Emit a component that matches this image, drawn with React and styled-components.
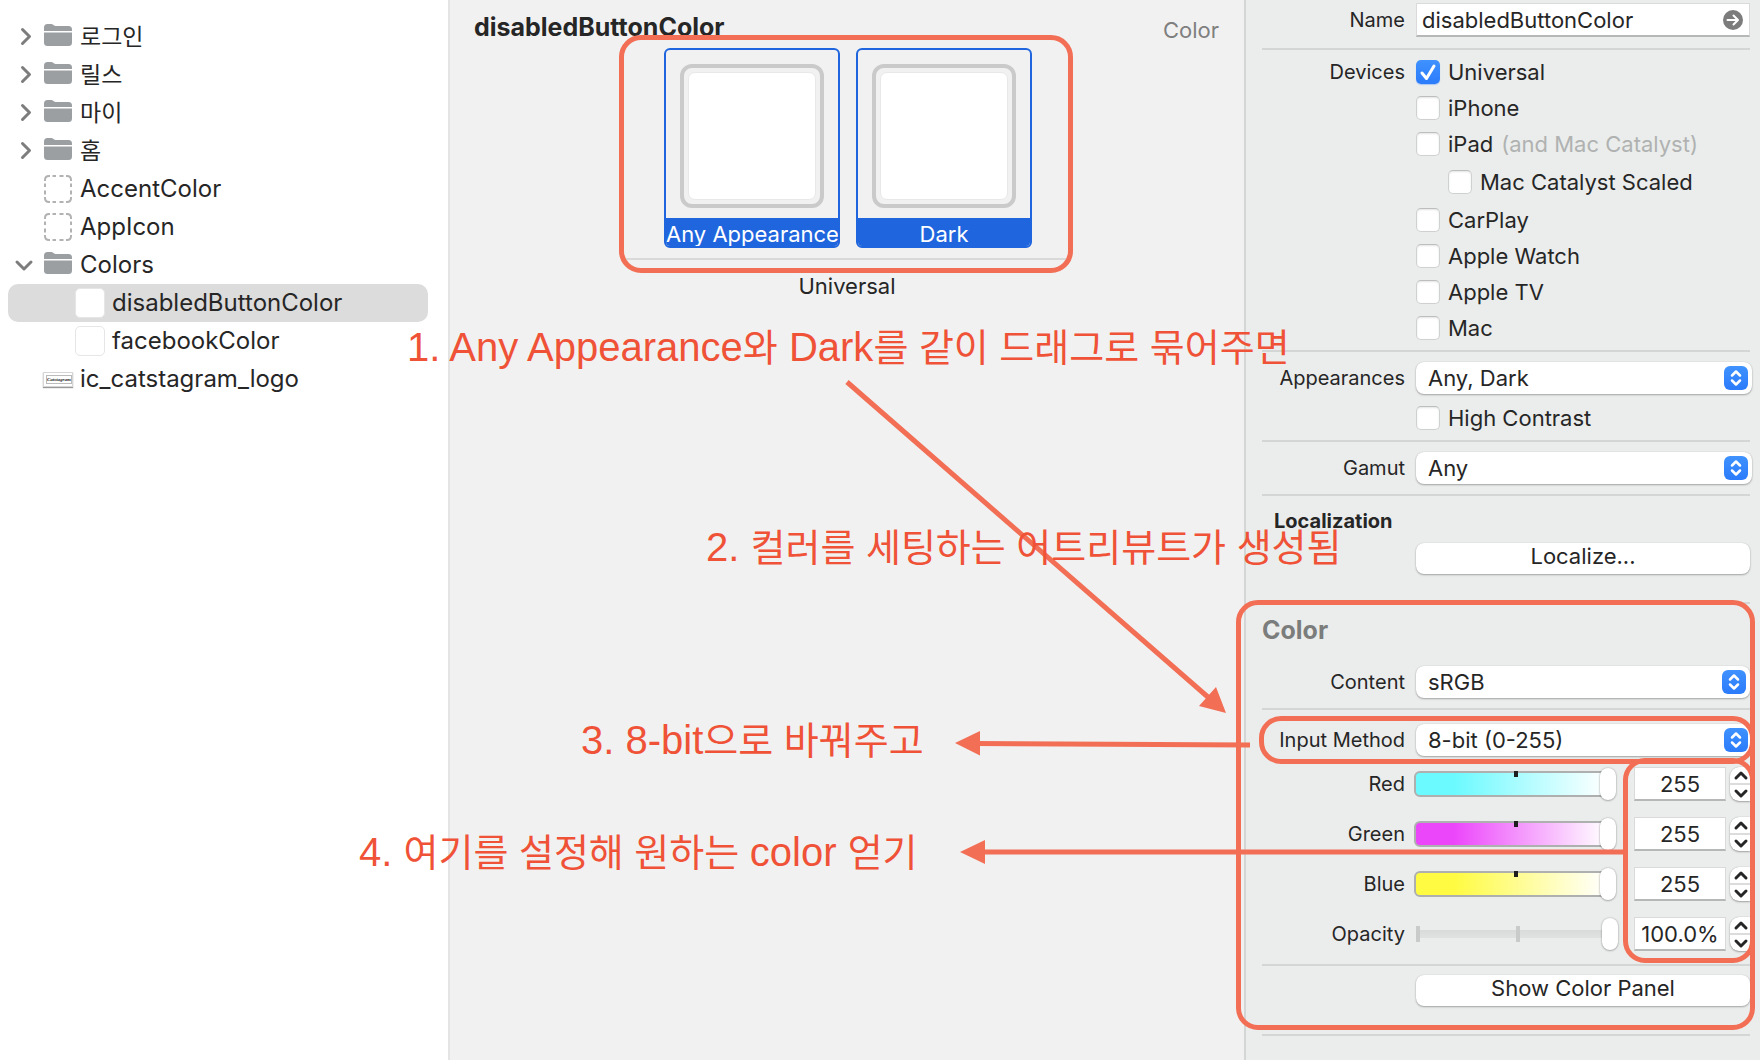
import React from "react";
import styled, { createGlobalStyle, css } from "styled-components";

const sans = `Inter, "Noto Sans CJK KR", sans-serif`;
const ink = "#262626";
const coral = "#f26f56";

const Global = createGlobalStyle`
  * { box-sizing: border-box; }
  html, body { margin: 0; }
  body { background: #fff; color: ${ink}; font: 22px/28px ${sans}; }
  button, input, select { font: inherit; color: inherit; margin: 0; }
`;

const Page = styled.div`
  position: relative;
  display: grid;
  grid-template-columns: 450px minmax(0, 1fr) 516px;
  min-height: 100vh;
  overflow: hidden;
`;

/* ---------- asset list ---------- */
const Sidebar = styled.nav`
  background: #fff;
  border-right: 2px solid #e4e4e4;
  padding: 18px 20px 0 8px;
`;
const Tree = styled.ul`
  list-style: none;
  margin: 0;
  padding: 0;
`;
const Row = styled.li`
  display: flex;
  align-items: center;
  height: 38px;
  padding-left: ${(p) => (p.$nested ? 67 : 8)}px;
  border-radius: 10px;
  background: ${(p) => (p.$selected ? "#dcdcdc" : "transparent")};
`;
const Disclosure = styled.span`
  display: flex;
  justify-content: center;
  width: 16px;
  margin-right: 12px;
`;
const RowIcon = styled.span`
  display: flex;
  align-items: center;
  justify-content: center;
  width: 28px;
  margin-right: 8px;
`;
const Swatch = styled.span`
  width: 30px;
  height: 30px;
  margin-right: 7px;
  background: #fff;
  border: 1px solid #e6e6e6;
  border-radius: 5px;
`;
const Thumb = styled.span`
  flex: none;
  display: flex;
  width: 30px;
  height: 15px;
  padding: 2px;
  background: #fff;
  border: 1px solid #d6d6d6;
  box-shadow: 0 1px 1px #999;
`;
const ThumbText = styled.span`
  flex: 1;
  border: 1px solid #bbb;
  font: italic bold 5px/7px "Liberation Serif", serif;
  text-align: center;
`;
const RowName = styled.span`
  font-size: 24px;
`;
const KoreanName = styled.span`
  font-size: 23px;
  line-height: 26px;
`;

const Chevron = ({ open }) => (
  <svg width="18" height="18" viewBox="0 0 18 18" fill="none" stroke="#7d7d7d" strokeWidth="3" strokeLinecap="round" strokeLinejoin="round" overflow="visible">
    <path d={open ? "M2 6l7 7 7-7" : "M7.500 1.500l7 7-7 7"} />
  </svg>
);
const Folder = () => (
  <svg width="28" height="24" viewBox="0 2 28 24" fill="#9b9fa2" overflow="visible">
    <path d="M0 8V4.500Q0 1 3.500 1H7Q8.500 1 9.500 2T12 3H24.500Q28 3 28 6.500V8Z" />
    <path d="M0 9.500H28V19.500Q28 23 24.500 23H3.500Q0 23 0 19.500Z" />
  </svg>
);
const Dashed = () => (
  <svg width="28" height="28" viewBox="0 0 28 28" fill="none" stroke="#b2b2b2" strokeWidth="2">
    <path d="M1 6V5Q1 1 5 1H6M22 1H23Q27 1 27 5V6M27 22V23Q27 27 23 27H22M6 27H5Q1 27 1 23V22" />
    <path d="M8.500 1H12M15.500 1H19.500M8.500 27H12M15.500 27H19.500M1 8.500V12M1 15.500V19.500M27 8.500V12M27 15.500V19.500" />
  </svg>
);

/* ---------- canvas ---------- */
const Canvas = styled.main`
  background: #f1f1f1;
  padding-top: 12px;
`;
const CanvasHead = styled.header`
  display: flex;
  align-items: flex-start;
  justify-content: space-between;
  height: 24px;
  padding: 0 25px 0 24px;
`;
const AssetTitle = styled.h1`
  margin: 0;
  font-size: 25px;
  line-height: 30px;
  font-weight: 700;
`;
const AssetKind = styled.span`
  padding-top: 4px;
  color: #7f7f7f;
`;
const AssetSet = styled.section`
  position: relative;
  width: 446px;
  margin: 0 auto;
  padding-top: 12px;
`;
const Wells = styled.div`
  display: flex;
  justify-content: center;
  gap: 16px;
  padding: 0 0 10px 2px;
  border-bottom: 2px solid #d9d9d9;
`;
const Well = styled.figure`
  display: flex;
  flex-direction: column;
  align-items: center;
  width: 176px;
  height: 200px;
  margin: 0;
  padding-top: 14px;
  border: 2px solid #1f66de;
  border-radius: 6px;
  overflow: hidden;
`;
const WellFrame = styled.div`
  width: 144px;
  height: 144px;
  padding: 4px;
  border: 4px solid #cacaca;
  border-radius: 12px;
`;
const WellColor = styled.div`
  height: 128px;
  background: #fff;
  border: 1px solid #e8e8e8;
  border-radius: 7px;
`;
const WellName = styled.figcaption`
  align-self: stretch;
  margin-top: 10px;
  padding: 2px 0;
  background: #1f66de;
  color: #fff;
  line-height: 28px;
  text-align: center;
  white-space: nowrap;
`;
const Idiom = styled.p`
  margin: 12px 0 0;
  text-align: center;
`;

/* ---------- inspector ---------- */
const Inspector = styled.aside`
  background: #ebedec;
  border-left: 2px solid #d4d6d5;
  padding: 3px 10px 0 16px;
`;
const Group = styled.section`
  position: relative;
  display: flex;
  flex-direction: column;
  gap: ${(p) => p.$gap ?? 12}px;
  padding: ${(p) => p.$pad || "10px 0"};
  border-bottom: 2px solid #d4d6d5;
`;
const ColorSection = styled.div`
  position: relative;
`;
const Field = styled.div`
  display: grid;
  grid-template-columns: 143px minmax(0, 1fr);
  column-gap: 11px;
  align-items: center;
  min-height: ${(p) => p.$height || 32}px;
`;
const labelText = css`
  font-size: 20px;
  line-height: 24px;
  text-align: right;
  white-space: nowrap;
`;
const FieldLabel = styled.label`
  ${labelText}
  width: 143px;
`;
const NameBox = styled.div`
  display: flex;
  align-items: center;
  height: 34px;
  padding-right: 6px;
  background: #fff;
  border: 1px solid #d9dad9;
  border-bottom: 2px solid #b6b7b7;
`;
const NameInput = styled.input`
  flex: 1;
  min-width: 0;
  padding: 0 5px;
  border: 0;
  outline: 0;
  background: transparent;
`;
const GoButton = styled.button`
  display: flex;
  padding: 0;
  border: 0;
  background: none;
`;
const Devices = styled.fieldset`
  display: grid;
  grid-template-columns: 143px minmax(0, 1fr);
  column-gap: 11px;
  margin: 0;
  padding: 0;
  border: 0;
`;
const DevicesLabel = styled.span`
  ${labelText}
`;
const CheckList = styled.div`
  display: flex;
  flex-direction: column;
  gap: 12px;
`;
const CheckRow = styled.label`
  display: flex;
  align-items: center;
  height: 24px;
  gap: 8px;
  margin: ${(p) => (p.$nested ? "2px 0 2px 32px" : "0")};
  white-space: nowrap;
`;
const CheckBox = styled.input.attrs({ type: "checkbox" })`
  appearance: none;
  flex: none;
  width: 24px;
  height: 24px;
  border: 1px solid #cfd0d0;
  border-top-color: #bcbdbd;
  border-radius: 5px;
  background: #fff;
  box-shadow: inset 0 1px 2px #e4e4e4;
  &:checked {
    border: 0;
    box-shadow: 0 1px 1px #a9c6f5;
    background: url("data:image/svg+xml,%3Csvg xmlns='http://www.w3.org/2000/svg' viewBox='0 0 24 24' fill='none' stroke='white' stroke-width='3' stroke-linecap='round' stroke-linejoin='round'%3E%3Cpath d='M6 13l4.500 5.500L18 6'/%3E%3C/svg%3E"),
      linear-gradient(#3f92ff, #2b7bfb);
  }
`;
const Muted = styled.span`
  color: #b0b2b1;
`;
const SelectWrap = styled.div`
  position: relative;
  display: flex;
  align-items: center;
  margin-right: ${(p) => (p.$flush ? 0 : -2)}px;
  height: 32px;
  border-radius: 8px;
  background: #fff;
  box-shadow: 0 0 1px rgba(0, 0, 0, 0.2), 0 1px 2px rgba(0, 0, 0, 0.3);
`;
const Select = styled.select`
  appearance: none;
  width: 100%;
  height: 32px;
  padding: 0 40px 0 12px;
  border: 0;
  background: transparent;
`;
const SelectCap = styled.span`
  position: absolute;
  right: 4px;
  top: 4px;
  display: flex;
  width: 24px;
  height: 24px;
  border-radius: 6px;
  background: linear-gradient(#3f92ff, #2b7bfb);
  pointer-events: none;
`;
const SubHeading = styled.h3`
  margin: 0 0 0 12px;
  font-size: 20px;
  line-height: 24px;
  font-weight: 700;
`;
const Heading = styled.h2`
  margin: 0;
  font-size: 25px;
  line-height: 28px;
  font-weight: 700;
  color: #7b7d7c;
`;
const PushButton = styled.button`
  height: 31px;
  padding: 0 0 4px;
  border: 0;
  border-radius: 8px;
  background: #fff;
  line-height: 27px;
  box-shadow: 0 0 1px rgba(0, 0, 0, 0.2), 0 1px 2px rgba(0, 0, 0, 0.3);
`;
const Channels = styled.div`
  display: flex;
  flex-direction: column;
  gap: 16px;
`;
const Channel = styled.div`
  display: flex;
  align-items: center;
  height: 34px;
`;
const ColorTrack = styled.div`
  flex: none;
  display: flex;
  align-items: center;
  width: 194px;
  height: 26px;
  margin: 0 26px 0 9px;
  border: 2px solid #aeb0b0;
  border-radius: 6px;
  background: linear-gradient(90deg, ${(p) => p.$from} 20%, #fff);
`;
const OpacityTrack = styled.div`
  flex: none;
  display: flex;
  align-items: center;
  width: 190px;
  height: 8px;
  margin: 0 28px 0 11px;
  background: linear-gradient(#d9dbda, #e0e2e1);
`;
const Slider = styled.input.attrs({ type: "range" })`
  appearance: none;
  flex: none;
  width: 202px;
  height: 32px;
  margin-left: ${(p) => (p.$plain ? 0 : -2)}px;
  background: ${(p) =>
    p.$plain
      ? `linear-gradient(#c9cbca, #c9cbca) 0 8px / 4px 16px no-repeat,
         linear-gradient(#c9cbca, #c9cbca) 100px 8px / 4px 16px no-repeat`
      : `linear-gradient(#1e1e1e, #1e1e1e) 100px 3px / 4px 6px no-repeat`};
  &::-webkit-slider-thumb {
    appearance: none;
    width: 16px;
    height: 32px;
    border: 0;
    border-radius: 8px;
    background: #fff;
    box-shadow: 0 0 2px rgba(0, 0, 0, 0.3), 0 1px 2px rgba(0, 0, 0, 0.2);
  }
`;
const ValueInput = styled.input`
  width: 92px;
  height: 34px;
  padding: 0;
  border: 1px solid #d9dad9;
  border-bottom: 2px solid #b6b7b7;
  background: #fff;
  text-align: center;
`;
const Stepper = styled.div`
  display: flex;
  flex-direction: column;
  width: 20px;
  height: 34px;
  margin-left: 4px;
  border-radius: 9px 0 0 9px;
  background: #fff;
  box-shadow: 0 0 1px rgba(0, 0, 0, 0.3), 0 1px 2px rgba(0, 0, 0, 0.3);
`;
const StepButton = styled.button`
  flex: 1;
  display: flex;
  align-items: center;
  justify-content: center;
  padding: 0 0 0 2px;
  border: 0;
  background: none;
  & + & {
    border-top: 2px solid #dcdcdc;
  }
`;

/* ---------- notes drawn over the window ---------- */
const Outline = styled.div`
  position: absolute;
  inset: ${(p) => p.$inset};
  border: 5px solid ${coral};
  border-radius: 22px;
  pointer-events: none;
`;
const Arrows = styled.svg`
  position: absolute;
  left: 0;
  top: 0;
  pointer-events: none;
`;
const Note = styled.p`
  position: absolute;
  left: ${(p) => p.$x}px;
  top: ${(p) => p.$y}px;
  margin: 0;
  color: #ef5237;
  font: 40px/48px "Liberation Sans", "Noto Sans CJK KR", sans-serif;
  white-space: nowrap;
  pointer-events: none;
`;
const Ko = styled.span`
  font-size: 38px;
  line-height: 40px;
`;

const Caret = () => (
  <svg width="24" height="24" viewBox="0 0 24 24" fill="none" stroke="#fff" strokeWidth="2.500" strokeLinecap="round" strokeLinejoin="round">
    <path d="M8 9.500l4-4 4 4M8 14.500l4 4 4-4" />
  </svg>
);

function Popup({ id, label, value, flush }) {
  return (
    <Field>
      <FieldLabel htmlFor={id}>{label}</FieldLabel>
      <SelectWrap $flush={flush}>
        <Select id={id} defaultValue={value}>
          <option>{value}</option>
        </Select>
        <SelectCap>
          <Caret />
        </SelectCap>
      </SelectWrap>
    </Field>
  );
}

function ChannelRow({ label, from, value }) {
  const id = label.toLowerCase();
  return (
    <Channel>
      <FieldLabel htmlFor={id}>{label}</FieldLabel>
      {from ? (
        <ColorTrack $from={from}>
          <Slider id={id} min="0" max="255" defaultValue="255" />
        </ColorTrack>
      ) : (
        <OpacityTrack>
          <Slider id={id} min="0" max="100" defaultValue="100" $plain />
        </OpacityTrack>
      )}
      <ValueInput aria-label={`${label} value`} defaultValue={value} />
      <Stepper>
        {["M3 9l5-5 5 5", "M3 4l5 5 5-5"].map((d, i) => (
          <StepButton key={d} aria-label={`${i ? "Decrease" : "Increase"} ${label}`}>
            <svg width="16" height="13" viewBox="0 0 16 13" fill="none" stroke="#262626" strokeWidth="3" strokeLinecap="round" strokeLinejoin="round">
              <path d={d} />
            </svg>
          </StepButton>
        ))}
      </Stepper>
    </Channel>
  );
}

const folders = ["로그인", "릴스", "마이", "홈"];
const devices = [
  { name: "Universal", on: true },
  { name: "iPhone" },
  { name: "iPad", hint: "(and Mac Catalyst)" },
  { name: "Mac Catalyst Scaled", nested: true },
  { name: "CarPlay" },
  { name: "Apple Watch" },
  { name: "Apple TV" },
  { name: "Mac" },
];

export default function App() {
  return (
    <>
      <Global />
      <Page>
        <Sidebar>
          <Tree>
            {folders.map((name) => (
              <Row key={name}>
                <Disclosure><Chevron /></Disclosure>
                <RowIcon><Folder /></RowIcon>
                <KoreanName lang="ko">{name}</KoreanName>
              </Row>
            ))}
            {["AccentColor", "AppIcon"].map((name) => (
              <Row key={name}>
                <Disclosure />
                <RowIcon><Dashed /></RowIcon>
                <RowName>{name}</RowName>
              </Row>
            ))}
            <Row>
              <Disclosure><Chevron open /></Disclosure>
              <RowIcon><Folder /></RowIcon>
              <RowName>Colors</RowName>
            </Row>
            <Row $nested $selected>
              <Swatch />
              <RowName>disabledButtonColor</RowName>
            </Row>
            <Row $nested>
              <Swatch />
              <RowName>facebookColor</RowName>
            </Row>
            <Row>
              <Disclosure />
              <RowIcon>
                <Thumb><ThumbText>Catstagram</ThumbText></Thumb>
              </RowIcon>
              <RowName>ic_catstagram_logo</RowName>
            </Row>
          </Tree>
        </Sidebar>

        <Canvas>
          <CanvasHead>
            <AssetTitle>disabledButtonColor</AssetTitle>
            <AssetKind>Color</AssetKind>
          </CanvasHead>
          <AssetSet>
            <Wells>
              {["Any Appearance", "Dark"].map((name) => (
                <Well key={name}>
                  <WellFrame><WellColor /></WellFrame>
                  <WellName>{name}</WellName>
                </Well>
              ))}
            </Wells>
            <Idiom>Universal</Idiom>
            <Outline $inset="-1px -3px 27px -5px" />
          </AssetSet>
        </Canvas>

        <Inspector>
          <Group $pad="0 0 11px">
            <Field $height={34}>
              <FieldLabel htmlFor="name">Name</FieldLabel>
              <NameBox>
                <NameInput id="name" defaultValue="disabledButtonColor" />
                <GoButton aria-label="Show in list">
                  <svg width="20" height="20" viewBox="0 0 20 20" fill="none" stroke="#fff" strokeWidth="2" strokeLinecap="round" strokeLinejoin="round">
                    <circle cx="10" cy="10" r="10" fill="#7c7c7c" stroke="none" />
                    <path d="M4.500 10h10M10.500 5.500l4.500 4.500-4.500 4.500" />
                  </svg>
                </GoButton>
              </NameBox>
            </Field>
          </Group>
          <Group>
            <Devices aria-label="Devices">
              <DevicesLabel>Devices</DevicesLabel>
              <CheckList>
                {devices.map((d) => (
                  <CheckRow key={d.name} $nested={d.nested}>
                    <CheckBox defaultChecked={d.on} />
                    <span>{d.name}</span>
                    {d.hint && <Muted>{d.hint}</Muted>}
                  </CheckRow>
                ))}
              </CheckList>
            </Devices>
          </Group>
          <Group>
            <Popup id="appearances" label="Appearances" value="Any, Dark" />
            <Field $height={24}>
              <span />
              <CheckRow>
                <CheckBox />
                <span>High Contrast</span>
              </CheckRow>
            </Field>
          </Group>
          <Group>
            <Popup id="gamut" label="Gamut" value="Any" />
          </Group>
          <Group $pad="13px 0 28px" $gap={10}>
            <SubHeading>Localization</SubHeading>
            <Field $height={31}>
              <span />
              <PushButton>Localize...</PushButton>
            </Field>
          </Group>
          <ColorSection>
            <Group $pad="12px 0 10px" $gap={22}>
              <Heading>Color</Heading>
              <Popup id="content" label="Content" value="sRGB" flush />
            </Group>
            <Group $pad="14px 0 13px" $gap={11}>
              <Popup id="method" label="Input Method" value="8-bit (0-255)" />
              <Channels>
                <ChannelRow label="Red" from="#6bfaff" value="255" />
                <ChannelRow label="Green" from="#ec46fb" value="255" />
                <ChannelRow label="Blue" from="#fffb42" value="255" />
                <ChannelRow label="Opacity" value="100.0%" />
              </Channels>
              <Outline $inset="6px -5px 200px -3px" />
              <Outline $inset="48px -5px 1px 361px" />
            </Group>
            <Group $pad="9px 0 28px">
              <Field $height={31}>
                <span />
                <PushButton>Show Color Panel</PushButton>
              </Field>
            </Group>
            <Outline $inset="-4px -5px 6px -26px" />
          </ColorSection>
        </Inspector>

        <Arrows width="1760" height="1060" viewBox="0 0 1760 1060" fill={coral} stroke={coral}>
          <path d="M847 382L1209 698M1250 745L976 743.500M1623 852H980" fill="none" strokeWidth="5" />
          <path d="M1226 713L1199 706L1216 687ZM955 743L980 731V755.500ZM960 852L985 840V864Z" stroke="none" />
        </Arrows>
        <Note $x={407} $y={323}>1. Any Appearance<Ko>와</Ko> Dark<Ko>를 같이 드래그로 묶어주면</Ko></Note>
        <Note $x={706} $y={523}>2. <Ko>컬러를 세팅하는 어트리뷰트가 생성됨</Ko></Note>
        <Note $x={581} $y={716}>3. 8-bit<Ko>으로 바꿔주고</Ko></Note>
        <Note $x={359} $y={828}>4. <Ko>여기를 설정해 원하는 </Ko>color <Ko>얻기</Ko></Note>
      </Page>
    </>
  );
}
